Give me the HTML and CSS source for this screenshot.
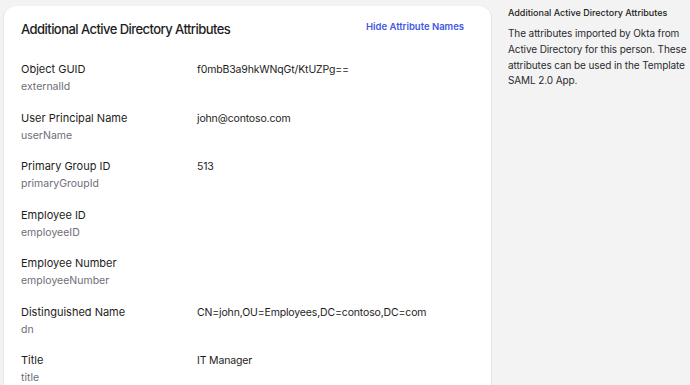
FILE: index.html
```html
<!DOCTYPE html>
<html lang="en">
<head>
<meta charset="UTF-8">
<meta name="viewport" content="width=device-width, initial-scale=1.0">
<title>Additional Active Directory Attributes</title>
<link rel="stylesheet" href="styles.css">
</head>
<body>

<div class="page">
    <div class="card">
        <div class="card-header">
            <h2>Additional Active Directory Attributes</h2>
            <a href="#" class="toggle-link">Hide Attribute Names</a>
        </div>

        <div class="attr-list">
            <div class="attr-row">
                <div class="attr-label">Object GUID<span class="attr-name">externalId</span></div>
                <div class="attr-value">f0mbB3a9hkWNqGt/KtUZPg==</div>
            </div>
            <div class="attr-row">
                <div class="attr-label">User Principal Name<span class="attr-name">userName</span></div>
                <div class="attr-value">john@contoso.com</div>
            </div>
            <div class="attr-row">
                <div class="attr-label">Primary Group ID<span class="attr-name">primaryGroupId</span></div>
                <div class="attr-value">513</div>
            </div>
            <div class="attr-row">
                <div class="attr-label">Employee ID<span class="attr-name">employeeID</span></div>
                <div class="attr-value"></div>
            </div>
            <div class="attr-row">
                <div class="attr-label">Employee Number<span class="attr-name">employeeNumber</span></div>
                <div class="attr-value"></div>
            </div>
            <div class="attr-row">
                <div class="attr-label">Distinguished Name<span class="attr-name">dn</span></div>
                <div class="attr-value">CN=john,OU=Employees,DC=contoso,DC=com</div>
            </div>
            <div class="attr-row">
                <div class="attr-label">Title<span class="attr-name">title</span></div>
                <div class="attr-value">IT Manager</div>
            </div>
        </div>
    </div>

    <div class="side-help">
        <h3>Additional Active Directory Attributes</h3>
        <p>The attributes imported by Okta from Active Directory for this person. These attributes can be used in the Template SAML 2.0 App.</p>
    </div>
</div>

</body>
</html>
```

FILE: styles.css
```css
body {
    margin: 0;
    font-family: Inter, 'Noto Sans', sans-serif;
    background: #f3f3f3;
    color: #1d1d21;
    overflow: hidden;
}

.page {
    display: flex;
    align-items: flex-start;
    padding: 6px 0 0 4px;
}

.card {
    width: 487px;
    flex-shrink: 0;
    background: white;
    border-radius: 12px 12px 0 0;
    box-shadow: -1px 0 0 #e6e6e6, 1px 0 0 #e6e6e6;
    min-height: 400px;
}

.card-header {
    display: flex;
    justify-content: space-between;
    align-items: flex-start;
    padding: 14px 27px 0 17px;
}

.card-header h2 {
    margin: 0;
    font-size: 13px;
    font-weight: 500;
    letter-spacing: -0.55px;
    line-height: 18px;
}

.toggle-link {
    color: #3f59e4;
    font-size: 9.5px;
    font-weight: 600;
    text-decoration: none;
    line-height: 14px;
}

.attr-list {
    padding: 23px 17px 0 17px;
}

.attr-row {
    display: flex;
    font-size: 11px;
    line-height: 17px;
    margin-bottom: 14.5px;
}

.attr-label {
    width: 176px;
    flex-shrink: 0;
}

.attr-name {
    display: block;
    font-size: 10.5px;
    color: #6e6e78;
}

.attr-value {
    flex: 1;
    font-size: 10.5px;
    letter-spacing: -0.15px;
}

.side-help {
    width: 182px;
    margin-left: 17px;
}

.side-help h3 {
    margin: 0;
    font-size: 9px;
    font-weight: 500;
    line-height: 13px;
}

.side-help p {
    margin: 7px 0 0;
    font-size: 10px;
    letter-spacing: -0.1px;
    line-height: 15.8px;
    color: #2a2a30;
}
```
